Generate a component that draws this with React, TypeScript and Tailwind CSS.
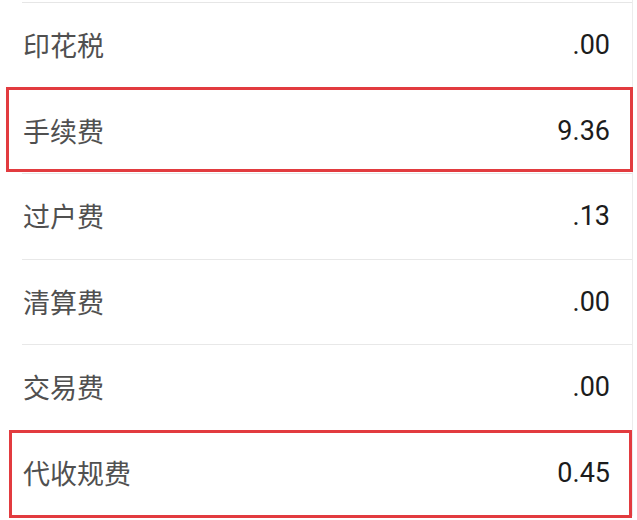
const rows = [
  { label: "印花税", value: ".00" },
  { label: "手续费", value: "9.36" },
  { label: "过户费", value: ".13" },
  { label: "清算费", value: ".00" },
  { label: "交易费", value: ".00" },
  { label: "代收规费", value: "0.45" },
];

export default function App() {
  return (
    <div className="relative h-[520px] w-[637px] overflow-hidden bg-white">
      <div className="w-[633px] border-r border-[#ececec] bg-white pl-[22px] pt-[2px]">
        <div className="border-t border-[#e6e6e6]">
          {rows.map((r) => (
            <div
              key={r.label}
              className="flex h-[85.5px] items-center justify-between border-b border-[#e8e8e8] pr-[22px]"
            >
              <span className="pl-px font-['Noto_Sans_CJK_SC',sans-serif] text-[27px] text-[#505050]">
                {r.label}
              </span>
              <span className="font-['Roboto',sans-serif] text-[27px] text-[#1c1c1c]">
                {r.value}
              </span>
            </div>
          ))}
        </div>
      </div>
      {/* highlight boxes */}
      <div className="absolute left-[6px] top-[87px] h-[85px] w-[627px] border-[3px] border-[#e23b3f]" />
      <div className="absolute left-[9px] top-[430px] h-[88px] w-[623px] border-[3px] border-[#e23b3f]" />
    </div>
  );
}
